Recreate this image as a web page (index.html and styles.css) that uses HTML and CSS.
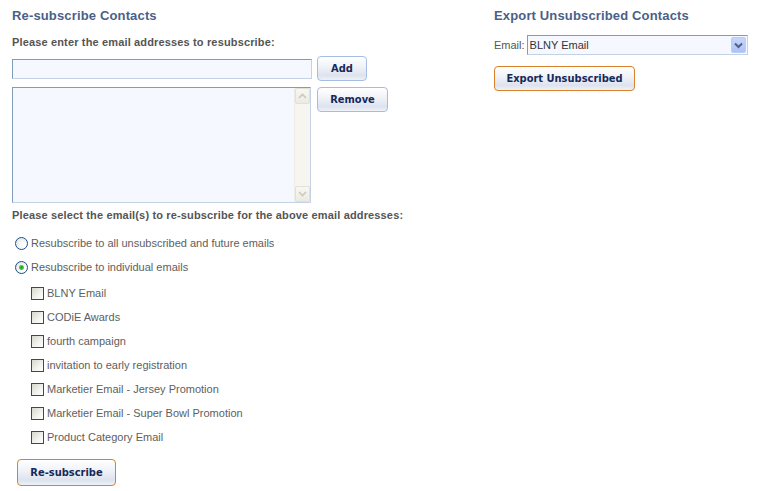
FILE: index.html
```html
<!DOCTYPE html>
<html lang="en">
<head>
    <meta charset="UTF-8">
    <title>Re-subscribe Contacts</title>
    <link rel="stylesheet" href="styles.css">
</head>
<body>
    <div class="page">
        <section class="resub">
            <h2>Re-subscribe Contacts</h2>
            <p class="label">Please enter the email addresses to resubscribe:</p>

            <div class="entry-row">
                <input type="text" class="field" id="emailInput">
                <button type="button" class="btn btn-blue">Add</button>
            </div>

            <div class="list-row">
                <div class="listbox">
                    <textarea class="list-area"></textarea>
                    <div class="scrollbar">
                        <span class="sb-btn">
                            <svg width="9" height="6" viewBox="0 0 9 6"><path d="M1 5 L4.5 1.5 L8 5" fill="none" stroke="#c9c9bd" stroke-width="1.6"/></svg>
                        </span>
                        <span class="sb-track"></span>
                        <span class="sb-btn">
                            <svg width="9" height="6" viewBox="0 0 9 6"><path d="M1 1 L4.5 4.5 L8 1" fill="none" stroke="#c9c9bd" stroke-width="1.6"/></svg>
                        </span>
                    </div>
                </div>
                <button type="button" class="btn btn-blue">Remove</button>
            </div>

            <p class="label select-label">Please select the email(s) to re-subscribe for the above email addresses:</p>

            <label class="opt radio-opt first-opt">
                <input type="radio" name="mode">
                Resubscribe to all unsubscribed and future emails
            </label>
            <label class="opt radio-opt">
                <input type="radio" name="mode" checked>
                Resubscribe to individual emails
            </label>

            <div class="email-list">
                <label class="opt check-opt"><input type="checkbox"> BLNY Email</label>
                <label class="opt check-opt"><input type="checkbox"> CODiE Awards</label>
                <label class="opt check-opt"><input type="checkbox"> fourth campaign</label>
                <label class="opt check-opt"><input type="checkbox"> invitation to early registration</label>
                <label class="opt check-opt"><input type="checkbox"> Marketier Email - Jersey Promotion</label>
                <label class="opt check-opt"><input type="checkbox"> Marketier Email - Super Bowl Promotion</label>
                <label class="opt check-opt"><input type="checkbox"> Product Category Email</label>
            </div>

            <button type="button" class="btn btn-orange btn-resub">Re-subscribe</button>
        </section>

        <section class="export">
            <h2>Export Unsubscribed Contacts</h2>
            <div class="email-pick">
                <span class="pick-label">Email:</span>
                <div class="select-box">
                    <select class="select">
                        <option>BLNY Email</option>
                        <option>CODiE Awards</option>
                        <option>fourth campaign</option>
                    </select>
                    <span class="select-arrow">
                        <svg width="9" height="7" viewBox="0 0 9 7"><path d="M1 1.5 L4.5 5 L8 1.5" fill="none" stroke="#4d6185" stroke-width="2"/></svg>
                    </span>
                </div>
            </div>
            <button type="button" class="btn btn-orange btn-export">Export Unsubscribed</button>
        </section>
    </div>
</body>
</html>
```

FILE: styles.css
```css
:root {
    --heading: #4b5f8a;
    --label: #555555;
    --option: #5e5e5e;
    --btn-text: #15295a;
    --field-bg: #f5f8fe;
}
* {
    box-sizing: border-box;
}
body {
    margin: 0;
    font-family: "Liberation Sans", Arial, sans-serif;
    font-size: 11px;
    color: var(--label);
    background: #ffffff;
}
.page {
    display: flex;
}
.resub {
    width: 494px;
    padding-left: 12px;
}
.export {
    flex: 1;
    padding-right: 13px;
}
h2 {
    margin: 8px 0 0;
    font-size: 13px;
    line-height: 16px;
    color: var(--heading);
    letter-spacing: 0.15px;
}
.label {
    margin: 11px 0 0;
    font-weight: bold;
    line-height: 14px;
    letter-spacing: 0.15px;
}
.entry-row {
    display: flex;
    align-items: center;
    gap: 5px;
    margin-top: 7px;
}
.field {
    width: 300px;
    height: 20px;
    border: 1px solid #c5d1e4;
    border-top-color: #7f9db9;
    border-left-color: #7f9db9;
    background: var(--field-bg);
    font: inherit;
}
.list-row {
    display: flex;
    align-items: flex-start;
    gap: 6px;
    margin-top: 6px;
}
.listbox {
    display: flex;
    width: 299px;
    height: 116px;
    border: 1px solid #c5d1e4;
    border-top-color: #7f9db9;
    border-left-color: #7f9db9;
    background: var(--field-bg);
}
.list-area {
    flex: 1;
    border: none;
    resize: none;
    background: transparent;
    font: inherit;
    outline: none;
}
.scrollbar {
    display: flex;
    flex-direction: column;
    width: 16px;
    background: #f6f5ef;
    border-left: 1px solid #eeede5;
}
.sb-btn {
    display: flex;
    align-items: center;
    justify-content: center;
    height: 16px;
    border: 1px solid #e2e1d8;
    border-radius: 2px;
    background: linear-gradient(#f8f8f3, #ebeae2);
}
.sb-track {
    flex: 1;
}
.select-label {
    margin-top: 5px;
}
.opt {
    display: flex;
    align-items: center;
    height: 24px;
    color: var(--option);
}
.radio-opt {
    padding-left: 3px;
}
.first-opt {
    margin-top: 9px;
}
.email-list {
    margin-top: 2px;
    padding-left: 19px;
}
.opt input {
    appearance: none;
    margin: 0 3px 0 0;
    width: 13px;
    height: 13px;
    flex: none;
}
.radio-opt input {
    border: 1px solid #1d5180;
    border-radius: 50%;
    background: radial-gradient(circle at 65% 65%, #ffffff 20%, #dcdcd5 100%);
}
.radio-opt input:checked {
    background: radial-gradient(circle, #1f9c1f 0, #45c845 2px, transparent 3px),
        radial-gradient(circle at 65% 65%, #ffffff 20%, #dcdcd5 100%);
}
.check-opt input {
    border: 1px solid #1d5180;
    background: linear-gradient(135deg, #d6d6ce 0%, #efefea 50%, #ffffff 100%);
}
.btn {
    font-family: "DejaVu Sans Condensed", "DejaVu Sans", Verdana, sans-serif;
    font-weight: bold;
    font-size: 11px;
    color: var(--btn-text);
    border-radius: 4px;
    background: linear-gradient(#ffffff 0%, #f1f3f8 40%, #dde3ee 80%, #eef1f6 100%);
    height: 25px;
    cursor: pointer;
    padding: 0;
}
.btn-blue {
    border: 1px solid #a6bde3;
}
.btn-orange {
    border: 1px solid #d9822b;
}
.entry-row .btn {
    width: 50px;
}
.list-row .btn {
    width: 71px;
}
.btn-resub {
    width: 99px;
    margin: 10px 0 0 5px;
    height: 27px;
}
.email-pick {
    display: flex;
    align-items: center;
    gap: 2px;
    margin-top: 11px;
}
.select-box {
    flex: 1;
    display: flex;
    align-items: center;
    height: 20px;
    border: 1px solid #c5d1e4;
    border-top-color: #7f9db9;
    border-left-color: #7f9db9;
    background: var(--field-bg);
}
.select {
    flex: 1;
    appearance: none;
    border: none;
    background: transparent;
    font: inherit;
    color: #333333;
    padding-left: 2px;
    outline: none;
}
.select-arrow {
    display: flex;
    align-items: center;
    justify-content: center;
    width: 15px;
    height: 16px;
    margin-right: 1px;
    border-radius: 2px;
    background: linear-gradient(#c6d5fb, #aec3f5);
    border: 1px solid #b9cdf7;
}
.btn-export {
    width: 141px;
    margin-top: 11px;
}
```
